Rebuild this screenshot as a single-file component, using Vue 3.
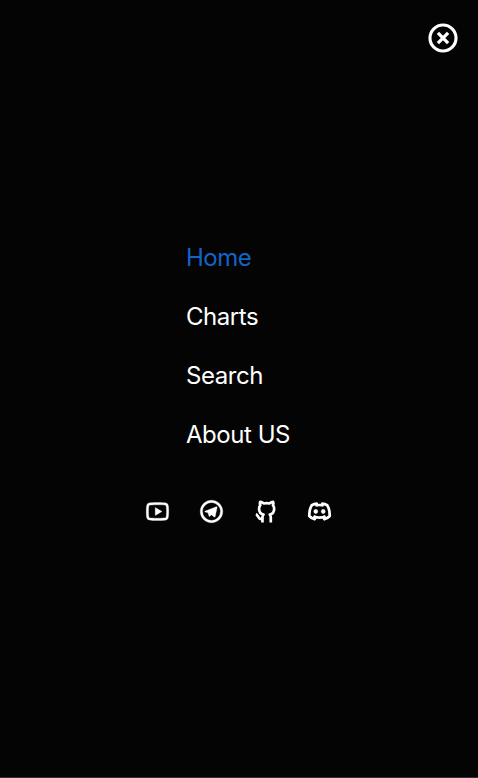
<script setup>
import { ref } from 'vue'

const active = ref('Home')
const links = ['Home', 'Charts', 'Search', 'About US']
</script>

<template>
  <div class="overlay">
    <header class="top">
      <button class="close" aria-label="Close menu">
        <svg viewBox="0 0 24 24" fill="none" stroke="currentColor">
          <circle cx="12" cy="12" r="9.200" stroke-width="2.200" />
          <path d="M8.400 8.400l7.200 7.200M15.600 8.400l-7.200 7.200" stroke-width="2.300" />
        </svg>
      </button>
    </header>
    <nav class="links">
      <a v-for="link in links" :key="link" class="link" :class="{ active: link === active }" @click="active = link">{{ link }}</a>
    </nav>
    <div class="socials">
      <svg class="icon" viewBox="0 0 24 24">
        <path d="M19.606 6.995c-.076-.298-.292-.523-.539-.592C18.63 6.28 16.5 6 12 6s-6.628.28-7.069.403c-.244.068-.46.293-.537.592C4.285 7.419 4 9.196 4 12s.285 4.58.394 5.006c.076.297.292.522.538.59C5.372 17.72 7.5 18 12 18s6.629-.28 7.069-.403c.244-.068.46-.293.537-.592C19.715 16.581 20 14.8 20 12s-.285-4.58-.394-5.005zm1.937-.497C22 8.28 22 12 22 12s0 3.72-.457 5.502c-.254.985-.997 1.76-1.938 2.022C17.896 20 12 20 12 20s-5.893 0-7.605-.476c-.945-.266-1.687-1.04-1.938-2.022C2 15.72 2 12 2 12s0-3.72.457-5.502c.254-.985.997-1.76 1.938-2.022C6.107 4 12 4 12 4s5.896 0 7.605.476c.945.266 1.687 1.04 1.938 2.022zM10 15.5v-7l6 3.5-6 3.5z" />
      </svg>
      <svg class="icon" viewBox="0 0 24 24">
        <path d="M12 20a8 8 0 1 0 0-16 8 8 0 0 0 0 16zm0 2C6.477 22 2 17.523 2 12S6.477 2 12 2s10 4.477 10 10-4.477 10-10 10zm-3.11-8.83l-2.498-.779c-.54-.165-.543-.537.121-.804l9.733-3.76c.565-.23.885.061.702.79l-1.657 7.82c-.116.557-.451.69-.916.433l-2.551-1.888-1.189 1.148c-.122.118-.221.219-.409.244-.187.026-.341-.03-.454-.34l-.87-2.871-.012.008z" />
      </svg>
      <svg class="icon" viewBox="0 0 24 24">
        <g class="outline">
          <path d="M9.300 21.800V17C9.300 16 9.600 15.300 10.200 14.700C7.500 14.100 6.300 12.400 6.300 9.500C6.300 8.200 6.700 7.200 7.400 6.400C6.900 5.300 6.900 4.300 7.300 3.400C8.300 3.500 9.400 4 10.600 4.900C12.200 4.500 13.800 4.500 15.400 4.900C16.600 4 17.700 3.500 18.700 3.400C19.100 4.300 19.100 5.300 18.600 6.400C19.300 7.200 19.700 8.200 19.700 9.500C19.700 12.400 18.500 14.100 15.800 14.700C16.400 15.300 16.700 16 16.700 17V21.800M3.400 14.600C5.200 14.900 5.500 17.800 7 18.400C7.800 18.700 8.500 18.700 9.300 18.500" />
        </g>
      </svg>
      <svg class="icon" viewBox="0 0 24 24">
        <g class="outline">
          <path d="M10 6.400L9.500 5C7.800 5.200 6.400 5.700 5.100 6.400C3.500 9 2.800 12 2.900 16C4.200 17.400 5.800 18.400 7.700 18.900L8.700 16.900M14 6.400L14.500 5C16.200 5.200 17.600 5.700 18.900 6.400C20.500 9 21.200 12 21.100 16C19.800 17.400 18.200 18.400 16.300 18.900L15.300 16.900M8.300 6.700C10.600 6.100 13.400 6.100 15.700 6.700M6.600 16.100C9.900 17.700 14.100 17.700 17.400 16.100" />
        </g>
        <ellipse cx="8.700" cy="12" rx="1.800" ry="1.900" />
        <ellipse cx="15.300" cy="12" rx="1.800" ry="1.900" />
      </svg>
    </div>
  </div>
</template>

<style>
body {
  background: #040404;
}
</style>

<style scoped>
.overlay {
  box-sizing: border-box;
  height: 100vh;
  display: flex;
  flex-direction: column;
  align-items: center;
  background: #040404;
  border-bottom: 1px solid #343135;
  color: #fff;
  font-family: Inter, sans-serif;
}
.top {
  box-sizing: border-box;
  width: 100%;
  height: 228px;
  display: flex;
  justify-content: flex-end;
  align-items: flex-start;
  padding: 21px 18px 0 0;
}
.close {
  display: flex;
  padding: 0;
  border: 0;
  background: none;
  color: inherit;
}
.close svg {
  width: 34px;
  height: 34px;
}
.links {
  display: flex;
  flex-direction: column;
  padding-right: 2px;
}
.link {
  font-size: 24px;
  line-height: 59px;
  letter-spacing: -0.45px;
  cursor: pointer;
}
.link.active {
  color: #1463c9;
}
.socials {
  display: flex;
  gap: 27px;
  margin-top: 34px;
  padding-right: 1px;
}
.icon {
  width: 27px;
  height: 27px;
  fill: currentColor;
  stroke: currentColor;
  stroke-width: 0.3;
}
.outline {
  fill: none;
  stroke-width: 2.4;
  stroke-linejoin: round;
}
</style>
